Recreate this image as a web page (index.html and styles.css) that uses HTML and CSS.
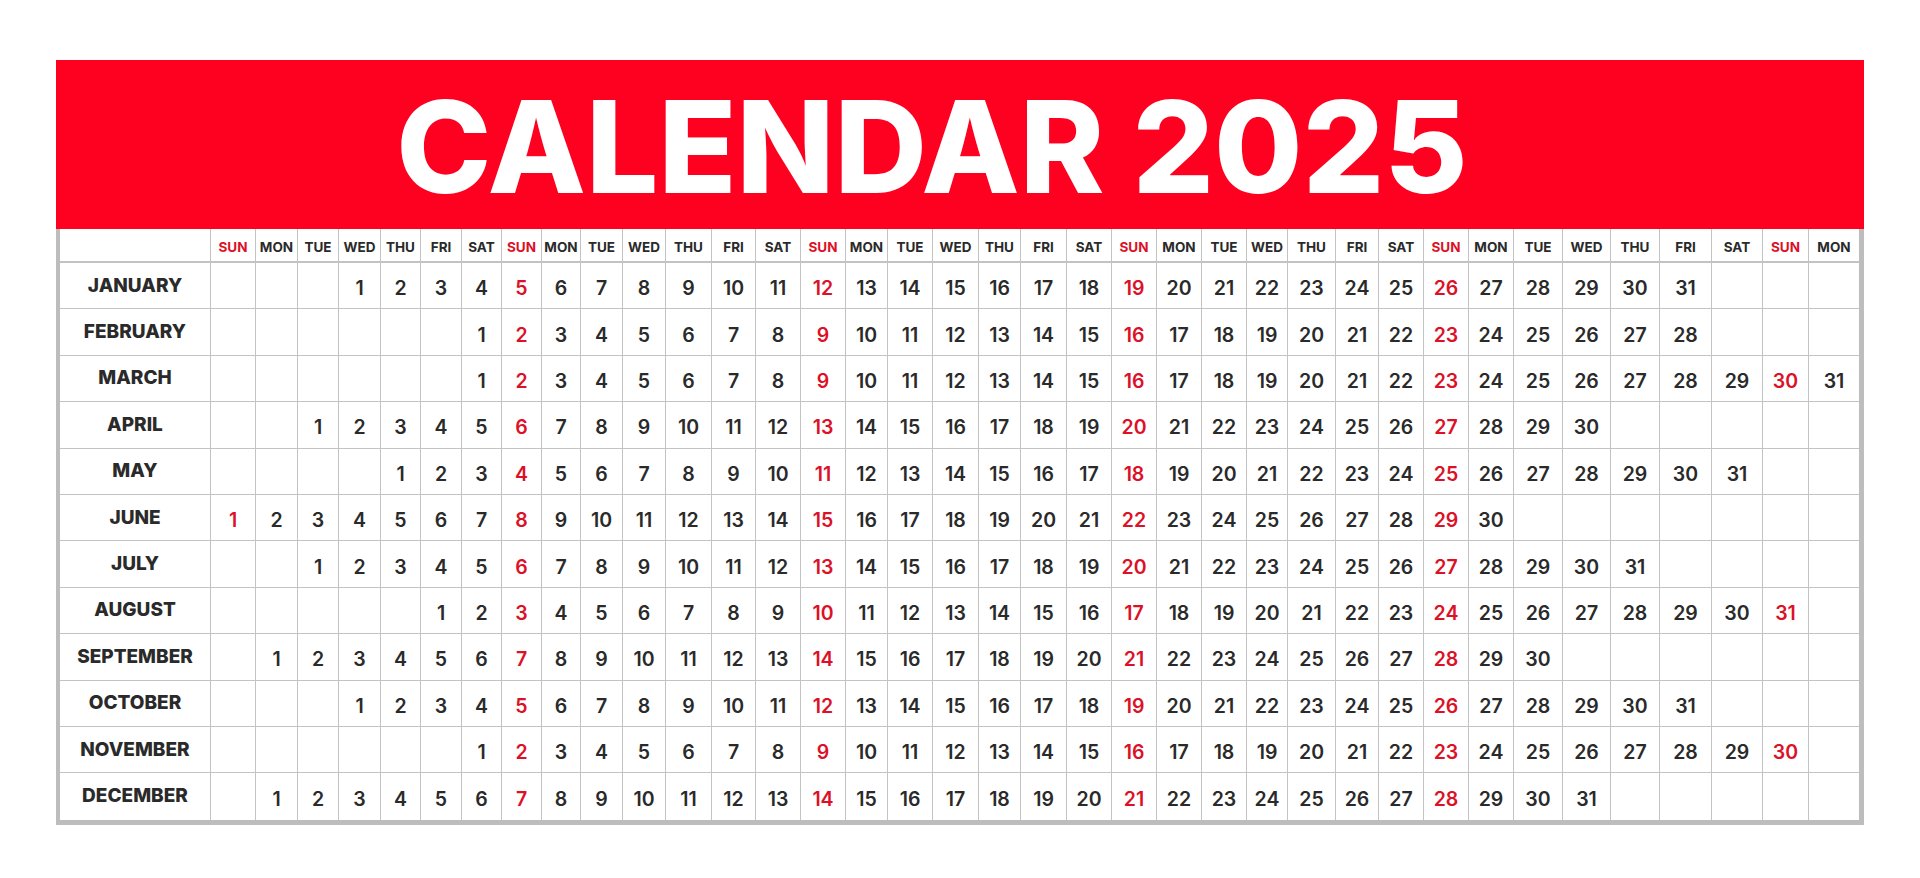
FILE: index.html
```html
<!DOCTYPE html>
<html lang="en">
<head>
<meta charset="utf-8">
<title>Calendar 2025</title>
<link rel="stylesheet" href="styles.css">
</head>
<body>
<div class="cal">
  <div class="banner"><h1 class="title">CALENDAR 2025</h1></div>
  <div class="grid">
    <div class="row head"><div class="m"></div><span>SUN</span><span>MON</span><span>TUE</span><span>WED</span><span>THU</span><span>FRI</span><span>SAT</span><span>SUN</span><span>MON</span><span>TUE</span><span>WED</span><span>THU</span><span>FRI</span><span>SAT</span><span>SUN</span><span>MON</span><span>TUE</span><span>WED</span><span>THU</span><span>FRI</span><span>SAT</span><span>SUN</span><span>MON</span><span>TUE</span><span>WED</span><span>THU</span><span>FRI</span><span>SAT</span><span>SUN</span><span>MON</span><span>TUE</span><span>WED</span><span>THU</span><span>FRI</span><span>SAT</span><span>SUN</span><span>MON</span></div>
    <div class="row"><div class="m">JANUARY</div><span></span><span></span><span></span><span>1</span><span>2</span><span>3</span><span>4</span><span>5</span><span>6</span><span>7</span><span>8</span><span>9</span><span>10</span><span>11</span><span>12</span><span>13</span><span>14</span><span>15</span><span>16</span><span>17</span><span>18</span><span>19</span><span>20</span><span>21</span><span>22</span><span>23</span><span>24</span><span>25</span><span>26</span><span>27</span><span>28</span><span>29</span><span>30</span><span>31</span><span></span><span></span><span></span></div>
    <div class="row"><div class="m">FEBRUARY</div><span></span><span></span><span></span><span></span><span></span><span></span><span>1</span><span>2</span><span>3</span><span>4</span><span>5</span><span>6</span><span>7</span><span>8</span><span>9</span><span>10</span><span>11</span><span>12</span><span>13</span><span>14</span><span>15</span><span>16</span><span>17</span><span>18</span><span>19</span><span>20</span><span>21</span><span>22</span><span>23</span><span>24</span><span>25</span><span>26</span><span>27</span><span>28</span><span></span><span></span><span></span></div>
    <div class="row"><div class="m">MARCH</div><span></span><span></span><span></span><span></span><span></span><span></span><span>1</span><span>2</span><span>3</span><span>4</span><span>5</span><span>6</span><span>7</span><span>8</span><span>9</span><span>10</span><span>11</span><span>12</span><span>13</span><span>14</span><span>15</span><span>16</span><span>17</span><span>18</span><span>19</span><span>20</span><span>21</span><span>22</span><span>23</span><span>24</span><span>25</span><span>26</span><span>27</span><span>28</span><span>29</span><span>30</span><span>31</span></div>
    <div class="row"><div class="m">APRIL</div><span></span><span></span><span>1</span><span>2</span><span>3</span><span>4</span><span>5</span><span>6</span><span>7</span><span>8</span><span>9</span><span>10</span><span>11</span><span>12</span><span>13</span><span>14</span><span>15</span><span>16</span><span>17</span><span>18</span><span>19</span><span>20</span><span>21</span><span>22</span><span>23</span><span>24</span><span>25</span><span>26</span><span>27</span><span>28</span><span>29</span><span>30</span><span></span><span></span><span></span><span></span><span></span></div>
    <div class="row"><div class="m">MAY</div><span></span><span></span><span></span><span></span><span>1</span><span>2</span><span>3</span><span>4</span><span>5</span><span>6</span><span>7</span><span>8</span><span>9</span><span>10</span><span>11</span><span>12</span><span>13</span><span>14</span><span>15</span><span>16</span><span>17</span><span>18</span><span>19</span><span>20</span><span>21</span><span>22</span><span>23</span><span>24</span><span>25</span><span>26</span><span>27</span><span>28</span><span>29</span><span>30</span><span>31</span><span></span><span></span></div>
    <div class="row"><div class="m">JUNE</div><span>1</span><span>2</span><span>3</span><span>4</span><span>5</span><span>6</span><span>7</span><span>8</span><span>9</span><span>10</span><span>11</span><span>12</span><span>13</span><span>14</span><span>15</span><span>16</span><span>17</span><span>18</span><span>19</span><span>20</span><span>21</span><span>22</span><span>23</span><span>24</span><span>25</span><span>26</span><span>27</span><span>28</span><span>29</span><span>30</span><span></span><span></span><span></span><span></span><span></span><span></span><span></span></div>
    <div class="row"><div class="m">JULY</div><span></span><span></span><span>1</span><span>2</span><span>3</span><span>4</span><span>5</span><span>6</span><span>7</span><span>8</span><span>9</span><span>10</span><span>11</span><span>12</span><span>13</span><span>14</span><span>15</span><span>16</span><span>17</span><span>18</span><span>19</span><span>20</span><span>21</span><span>22</span><span>23</span><span>24</span><span>25</span><span>26</span><span>27</span><span>28</span><span>29</span><span>30</span><span>31</span><span></span><span></span><span></span><span></span></div>
    <div class="row"><div class="m">AUGUST</div><span></span><span></span><span></span><span></span><span></span><span>1</span><span>2</span><span>3</span><span>4</span><span>5</span><span>6</span><span>7</span><span>8</span><span>9</span><span>10</span><span>11</span><span>12</span><span>13</span><span>14</span><span>15</span><span>16</span><span>17</span><span>18</span><span>19</span><span>20</span><span>21</span><span>22</span><span>23</span><span>24</span><span>25</span><span>26</span><span>27</span><span>28</span><span>29</span><span>30</span><span>31</span><span></span></div>
    <div class="row"><div class="m">SEPTEMBER</div><span></span><span>1</span><span>2</span><span>3</span><span>4</span><span>5</span><span>6</span><span>7</span><span>8</span><span>9</span><span>10</span><span>11</span><span>12</span><span>13</span><span>14</span><span>15</span><span>16</span><span>17</span><span>18</span><span>19</span><span>20</span><span>21</span><span>22</span><span>23</span><span>24</span><span>25</span><span>26</span><span>27</span><span>28</span><span>29</span><span>30</span><span></span><span></span><span></span><span></span><span></span><span></span></div>
    <div class="row"><div class="m">OCTOBER</div><span></span><span></span><span></span><span>1</span><span>2</span><span>3</span><span>4</span><span>5</span><span>6</span><span>7</span><span>8</span><span>9</span><span>10</span><span>11</span><span>12</span><span>13</span><span>14</span><span>15</span><span>16</span><span>17</span><span>18</span><span>19</span><span>20</span><span>21</span><span>22</span><span>23</span><span>24</span><span>25</span><span>26</span><span>27</span><span>28</span><span>29</span><span>30</span><span>31</span><span></span><span></span><span></span></div>
    <div class="row"><div class="m">NOVEMBER</div><span></span><span></span><span></span><span></span><span></span><span></span><span>1</span><span>2</span><span>3</span><span>4</span><span>5</span><span>6</span><span>7</span><span>8</span><span>9</span><span>10</span><span>11</span><span>12</span><span>13</span><span>14</span><span>15</span><span>16</span><span>17</span><span>18</span><span>19</span><span>20</span><span>21</span><span>22</span><span>23</span><span>24</span><span>25</span><span>26</span><span>27</span><span>28</span><span>29</span><span>30</span><span></span></div>
    <div class="row"><div class="m">DECEMBER</div><span></span><span>1</span><span>2</span><span>3</span><span>4</span><span>5</span><span>6</span><span>7</span><span>8</span><span>9</span><span>10</span><span>11</span><span>12</span><span>13</span><span>14</span><span>15</span><span>16</span><span>17</span><span>18</span><span>19</span><span>20</span><span>21</span><span>22</span><span>23</span><span>24</span><span>25</span><span>26</span><span>27</span><span>28</span><span>29</span><span>30</span><span>31</span><span></span><span></span><span></span><span></span><span></span></div>
  </div>
</div>
</body>
</html>
```

FILE: styles.css
```css
* { box-sizing: border-box; }

html, body {
  margin: 0;
  padding: 0;
  background: #ffffff;
}

body {
  font-family: Inter, "Liberation Sans", sans-serif;
  color: #2a2a2a;
  width: 1920px;
  height: 878px;
  overflow: hidden;
}

.cal {
  margin: 60px 0 0 56px;
  width: 1808px;
}

.banner {
  height: 169px;
  background: #fe0020;
  display: flex;
  align-items: center;
  justify-content: center;
  padding-right: 56px;
  padding-top: 4px;
}

.title {
  margin: 0;
  color: #ffffff;
  font-size: 128px;
  font-weight: 800;
  line-height: 1;
  letter-spacing: 0;
}

.grid {
  border-left: 4px solid #bdbdbd;
  border-right: 5px solid #bdbdbd;
  border-bottom: 5px solid #bdbdbd;
}

.row {
  display: grid;
  grid-template-columns: 151px 45px 42px 41px 42px 40px 41px 40px 40px 39px 42px 43px 46px 44px 45px 45px 42px 45px 46px 42px 46px 45px 45px 45px 45px 41px 48px 43px 45px 45px 45px 49px 48px 49px 52px 51px 46px 50px;
  height: 46.4px;
}

.row > * {
  border-right: 1.5px solid #c3c3c3;
  border-bottom: 1.5px solid #c3c3c3;
  display: flex;
  align-items: center;
  justify-content: center;
}

.row > :last-child { border-right: none; }
.row:last-child > * { border-bottom: none; }

.row > span {
  font-size: 19.5px;
  font-weight: 600;
  padding-top: 5px;
}

.row > :nth-child(7n+2) { color: #dc1127; }

.m {
  font-size: 19px;
  font-weight: 800;
  padding-bottom: 1px;
  color: #2a2a2a;
}

.row.head {
  height: 34px;
  border-bottom: 0.5px solid #c3c3c3;
}

.row.head > span {
  font-size: 13.5px;
  font-weight: 700;
  padding-top: 3px;
}
```
